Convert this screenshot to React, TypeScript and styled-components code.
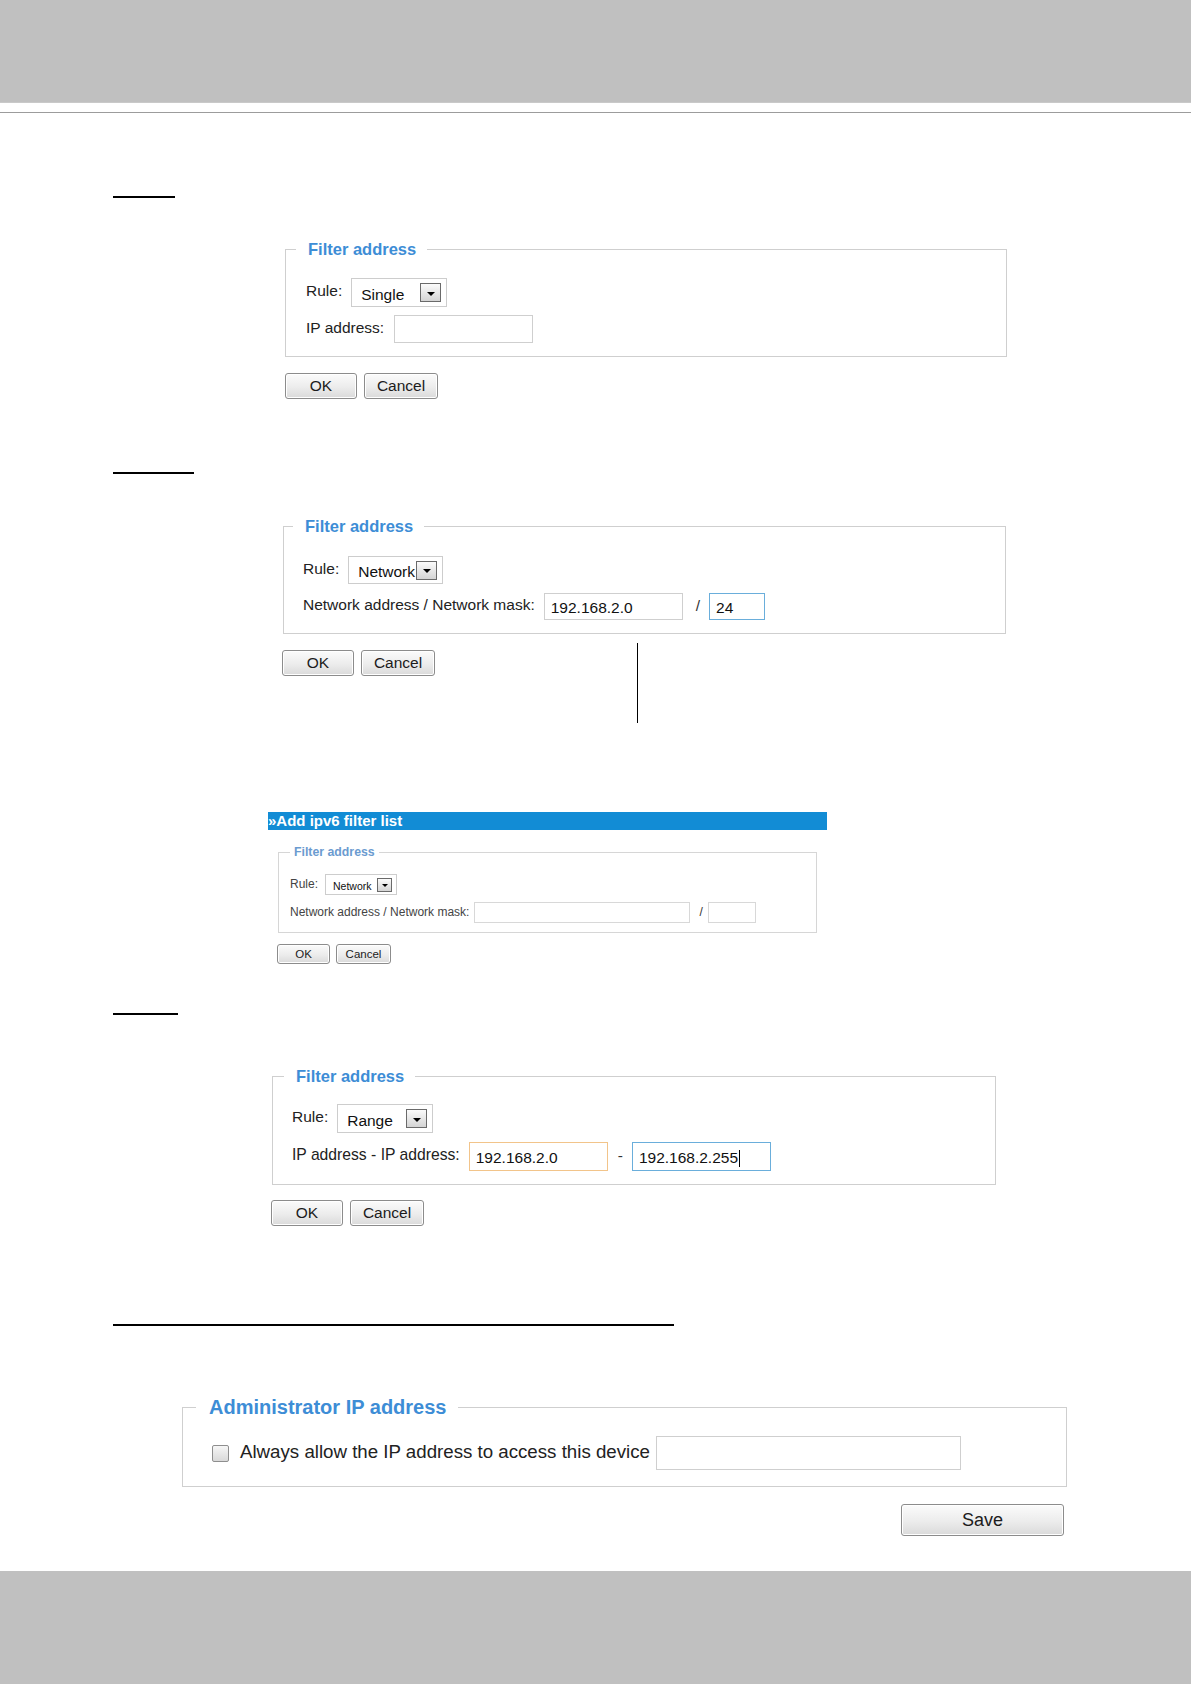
import React from "react";
import styled, { createGlobalStyle } from "styled-components";

const GlobalStyle = createGlobalStyle`
  html, body { margin: 0; padding: 0; background: #ffffff; }
  body { font-family: "Liberation Sans", Arial, sans-serif; color: #222; }
  * { box-sizing: border-box; }
`;

const Page = styled.div`
  min-height: 1684px;
  display: flex;
  flex-direction: column;
`;

const TopBand = styled.header`
  height: 103px;
  background: #c0c0c0;
  border-bottom: 1px solid #c9c9c9;
`;

const TopRule = styled.div`
  margin-top: 9px;
  height: 1px;
  background: #9c9c9c;
`;

const Main = styled.main`
  display: flex;
  flex-direction: column;
  align-items: flex-start;
  padding-left: 111px;
`;

const HeadingRule = styled.div<{ $w: number; $top: number; $indent?: number }>`
  width: ${(p) => p.$w}px;
  height: 2px;
  background: #000;
  margin-top: ${(p) => p.$top}px;
  margin-left: ${(p) => p.$indent ?? 0}px;
`;

const Fieldset = styled.fieldset<{
  $w: number;
  $top: number;
  $left: number;
  $pad: string;
  $border?: string;
}>`
  width: ${(p) => p.$w}px;
  margin: ${(p) => p.$top}px 0 0 ${(p) => p.$left}px;
  padding: ${(p) => p.$pad};
  border: 1px solid ${(p) => p.$border ?? "#cfcfcf"};
  min-width: 0;
`;

const Legend = styled.legend<{
  $fs: number;
  $lh: number;
  $pad: string;
  $shift: number;
  $color?: string;
}>`
  font-size: ${(p) => p.$fs}px;
  line-height: ${(p) => p.$lh}px;
  font-weight: bold;
  color: ${(p) => p.$color ?? "#3d8dd6"};
  padding: ${(p) => p.$pad};
  margin-left: ${(p) => p.$shift}px;
  white-space: nowrap;
`;

const FormRow = styled.div<{ $gap: number; $top?: number }>`
  display: flex;
  align-items: center;
  gap: ${(p) => p.$gap}px;
  margin-top: ${(p) => p.$top ?? 0}px;
`;

const Label = styled.span<{ $fs: number; $color?: string; $lift?: number }>`
  font-size: ${(p) => p.$fs}px;
  color: ${(p) => p.$color ?? "#222"};
  padding-bottom: ${(p) => p.$lift ?? 3}px;
  white-space: nowrap;
`;

const CheckLabel = styled(Label)`
  margin: 0 6px 0 11px;
`;

const SelectBox = styled.div<{ $w: number; $h: number; $fs: number; $padL: number; $padR: number }>`
  width: ${(p) => p.$w}px;
  height: ${(p) => p.$h}px;
  display: flex;
  align-items: center;
  justify-content: space-between;
  padding: 0 ${(p) => p.$padR}px 0 ${(p) => p.$padL}px;
  border: 1px solid #cdcdcd;
  background: #fff;
  font-size: ${(p) => p.$fs}px;
  color: #111;
`;

const SelectValue = styled.span<{ $drop: number }>`
  padding-top: ${(p) => p.$drop}px;
  white-space: nowrap;
`;

const ArrowButton = styled.span<{ $w: number; $h: number }>`
  width: ${(p) => p.$w}px;
  height: ${(p) => p.$h}px;
  flex: none;
  display: flex;
  align-items: center;
  justify-content: center;
  border: 1px solid #6a6a6a;
  background: linear-gradient(#fbfbfb, #d4d4d4);
`;

const Caret = styled.span<{ $size: number }>`
  width: 0;
  height: 0;
  margin-top: ${(p) => Math.round(p.$size / 2)}px;
  border-left: ${(p) => p.$size}px solid transparent;
  border-right: ${(p) => p.$size}px solid transparent;
  border-top: ${(p) => p.$size}px solid #000;
`;

const TextBox = styled.div<{ $w: number; $h: number; $fs: number; $tone?: "blue" | "orange"; $border?: string }>`
  width: ${(p) => p.$w}px;
  height: ${(p) => p.$h}px;
  display: flex;
  align-items: center;
  padding: 3px 0 0 6px;
  font-size: ${(p) => p.$fs}px;
  color: #111;
  background: #fff;
  border: 1px solid
    ${(p) =>
      p.$tone === "blue" ? "#6aaedb" : p.$tone === "orange" ? "#f2c48a" : p.$border ?? "#cfcfcf"};
  white-space: nowrap;
`;

const TextCursor = styled.span`
  display: inline-block;
  width: 1px;
  height: 17px;
  background: #000;
  margin-left: 1px;
`;

const Sep = styled.span<{ $fs: number; $ml: number; $mr: number }>`
  font-size: ${(p) => p.$fs}px;
  color: #333;
  margin: 0 ${(p) => p.$mr}px 0 ${(p) => p.$ml}px;
  padding-bottom: 2px;
`;

const ButtonRow = styled.div<{ $top: number; $left: number; $gap: number }>`
  position: relative;
  display: flex;
  gap: ${(p) => p.$gap}px;
  margin: ${(p) => p.$top}px 0 0 ${(p) => p.$left}px;
`;

const Button = styled.button<{ $w: number; $h: number; $fs: number }>`
  width: ${(p) => p.$w}px;
  height: ${(p) => p.$h}px;
  padding: 0;
  font-family: "Liberation Sans", Arial, sans-serif;
  font-size: ${(p) => p.$fs}px;
  color: #1c1c1c;
  border: 1px solid #8c8c8c;
  border-radius: 3px;
  background: linear-gradient(#fbfbfb 0%, #ececec 55%, #dadada 100%);
  box-shadow: inset 0 0 0 1px #ffffff;
`;

const CalloutLine = styled.div<{ $x: number }>`
  position: absolute;
  left: ${(p) => p.$x}px;
  top: -7px;
  width: 1px;
  height: 80px;
  background: #000;
`;

const Shot = styled.div`
  width: 559px;
  height: 159px;
  margin: 136px 0 0 157px;
  display: flex;
  flex-direction: column;
  align-items: flex-start;
  background: #fff;
  overflow: hidden;
`;

const ShotBar = styled.div`
  width: 100%;
  height: 18px;
  background: #128cd5;
  color: #fff;
  font-size: 15px;
  font-weight: bold;
  line-height: 18px;
  white-space: nowrap;
`;

const CheckBox = styled.span`
  width: 17px;
  height: 17px;
  flex: none;
  border: 1px solid #8e8e8e;
  border-radius: 2px;
  background: linear-gradient(#f6f6f6, #d9d9d9);
`;

const SaveRow = styled.div`
  width: 885px;
  margin: 17px 0 0 71px;
  padding-right: 3px;
  display: flex;
  justify-content: flex-end;
`;

const BottomBand = styled.footer`
  margin-top: auto;
  height: 113px;
  background: #c0c0c0;
`;

type SelProps = { value: string; w: number; h?: number };

const Select = ({ value, w, h = 29 }: SelProps) => (
  <SelectBox $w={w} $h={h} $fs={15.5} $padL={9} $padR={5}>
    <SelectValue $drop={4}>{value}</SelectValue>
    <ArrowButton $w={21} $h={19}>
      <Caret $size={4} />
    </ArrowButton>
  </SelectBox>
);

const OkCancel = ({ top, left, children }: { top: number; left: number; children?: React.ReactNode }) => (
  <ButtonRow $top={top} $left={left} $gap={7}>
    <Button $w={72} $h={26} $fs={15.5}>OK</Button>
    <Button $w={74} $h={26} $fs={15.5}>Cancel</Button>
    {children}
  </ButtonRow>
);

export default function App() {
  return (
    <Page>
      <GlobalStyle />
      <TopBand />
      <TopRule />
      <Main>
        {/* Single */}
        <HeadingRule $w={62} $top={83} $indent={2} />
        <Fieldset $w={722} $top={41} $left={174} $pad="19px 0 13px 20px">
          <Legend $fs={16.5} $lh={20} $pad="0 11px 0 12px" $shift={-10}>
            Filter address
          </Legend>
          <FormRow $gap={9}>
            <Label $fs={15.5}>Rule:</Label>
            <Select value="Single" w={96} />
          </FormRow>
          <FormRow $gap={10} $top={8}>
            <Label $fs={15.5}>IP address:</Label>
            <TextBox $w={139} $h={28} $fs={15.5} />
          </FormRow>
        </Fieldset>
        <OkCancel top={16} left={174} />

        {/* Network */}
        <HeadingRule $w={81} $top={73} $indent={2} />
        <Fieldset $w={723} $top={42} $left={172} $pad="20px 0 13px 19px">
          <Legend $fs={16.5} $lh={20} $pad="0 11px 0 12px" $shift={-10}>
            Filter address
          </Legend>
          <FormRow $gap={9}>
            <Label $fs={15.5}>Rule:</Label>
            <Select value="Network" w={95} h={28} />
          </FormRow>
          <FormRow $gap={9} $top={9}>
            <Label $fs={15.5}>Network address / Network mask:</Label>
            <TextBox $w={139} $h={27} $fs={15.5}>192.168.2.0</TextBox>
            <Sep $fs={15.5} $ml={4} $mr={0}>/</Sep>
            <TextBox $w={56} $h={27} $fs={15.5} $tone="blue">24</TextBox>
          </FormRow>
        </Fieldset>
        <OkCancel top={16} left={171}>
          <CalloutLine $x={355} />
        </OkCancel>

        {/* ipv6 screenshot */}
        <Shot>
          <ShotBar>»Add ipv6 filter list</ShotBar>
          <Fieldset $w={539} $top={16} $left={10} $pad="16px 0 9px 11px" $border="#d6d6d6">
            <Legend $fs={12.3} $lh={12} $pad="0 4px" $shift={0} $color="#6b9bd0">
              Filter address
            </Legend>
            <FormRow $gap={7}>
              <Label $fs={12} $color="#444" $lift={2}>Rule:</Label>
              <SelectBox $w={72} $h={21} $fs={10.5} $padL={7} $padR={4}>
                <SelectValue $drop={2}>Network</SelectValue>
                <ArrowButton $w={15} $h={14}>
                  <Caret $size={3} />
                </ArrowButton>
              </SelectBox>
            </FormRow>
            <FormRow $gap={5} $top={7}>
              <Label $fs={12} $color="#444" $lift={2}>Network address / Network mask:</Label>
              <TextBox $w={216} $h={21} $fs={12} $border="#d8d8d8" />
              <Sep $fs={12} $ml={4} $mr={0}>/</Sep>
              <TextBox $w={48} $h={21} $fs={12} $border="#d8d8d8" />
            </FormRow>
          </Fieldset>
          <ButtonRow $top={11} $left={9} $gap={6}>
            <Button $w={53} $h={20} $fs={11.5}>OK</Button>
            <Button $w={55} $h={20} $fs={11.5}>Cancel</Button>
          </ButtonRow>
        </Shot>

        {/* Range */}
        <HeadingRule $w={65} $top={42} $indent={2} />
        <Fieldset $w={724} $top={51} $left={161} $pad="18px 0 13px 19px">
          <Legend $fs={16.5} $lh={20} $pad="0 11px 0 12px" $shift={-8}>
            Filter address
          </Legend>
          <FormRow $gap={9}>
            <Label $fs={15.5}>Rule:</Label>
            <Select value="Range" w={96} />
          </FormRow>
          <FormRow $gap={9} $top={9}>
            <Label $fs={15.7}>IP address - IP address:</Label>
            <TextBox $w={139} $h={29} $fs={15.5} $tone="orange">192.168.2.0</TextBox>
            <Sep $fs={15.5} $ml={1} $mr={0}>-</Sep>
            <TextBox $w={139} $h={29} $fs={15.5} $tone="blue">
              192.168.2.255
              <TextCursor />
            </TextBox>
          </FormRow>
        </Fieldset>
        <OkCancel top={15} left={160} />

        {/* Administrator IP address */}
        <HeadingRule $w={561} $top={98} $indent={2} />
        <Fieldset $w={885} $top={69} $left={71} $pad="17px 0 16px 29px">
          <Legend $fs={20} $lh={24} $pad="0 12px 0 13px" $shift={-16}>
            Administrator IP address
          </Legend>
          <FormRow $gap={0}>
            <CheckBox />
            <CheckLabel $fs={18.7} $lift={2}>
              Always allow the IP address to access this device
            </CheckLabel>
            <TextBox $w={305} $h={34} $fs={18} />
          </FormRow>
        </Fieldset>
        <SaveRow>
          <Button $w={163} $h={32} $fs={18}>Save</Button>
        </SaveRow>
      </Main>
      <BottomBand />
    </Page>
  );
}
